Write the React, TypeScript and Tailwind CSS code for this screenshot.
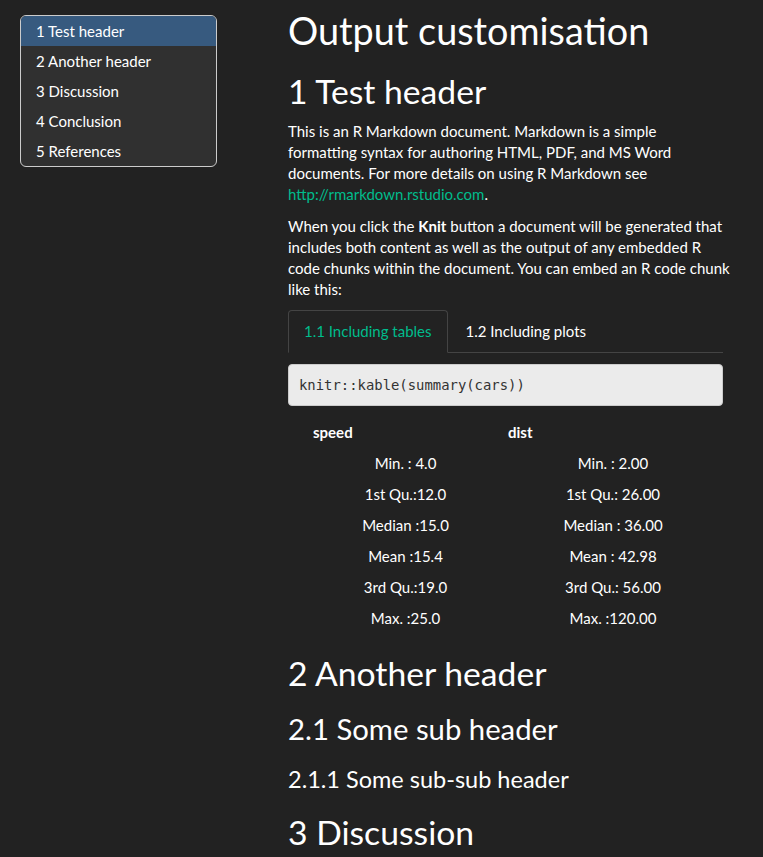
import React from "react";

const toc = ["1 Test header", "2 Another header", "3 Discussion", "4 Conclusion", "5 References"];

const rows: [string, string][] = [
  ["Min. : 4.0", "Min. : 2.00"],
  ["1st Qu.:12.0", "1st Qu.: 26.00"],
  ["Median :15.0", "Median : 36.00"],
  ["Mean :15.4", "Mean : 42.98"],
  ["3rd Qu.:19.0", "3rd Qu.: 56.00"],
  ["Max. :25.0", "Max. :120.00"],
];

export default function App() {
  return (
    <div className="min-h-[857px] bg-[#222222] text-white font-[Lato,sans-serif] text-[15px] leading-[21px] flex">
      <aside className="w-[288px] shrink-0 pl-[20px] pt-[15px]">
        <div className="w-[197px] border border-[#cccccc] rounded-[6px] overflow-hidden bg-[#303030]">
          {toc.map((t, i) => (
            <div
              key={t}
              className={
                i === 0
                  ? "h-[30px] flex items-center pl-[15px] pt-[1px] bg-[#375a7f] text-white text-[15px]"
                  : "h-[30px] flex items-center pl-[15px] pt-[1px] text-white text-[15px]"
              }
            >
              {t}
            </div>
          ))}
        </div>
      </aside>
      <main className="w-[435px] shrink-0 pt-[10px] pb-[20px]">
        <h1 className="text-[37.8px] leading-[1.1] font-normal mb-[10.5px]">Output customisation</h1>
        <h1 className="text-[33.7px] leading-[1.1] font-normal mt-[21px] mb-[11.5px]">1 Test header</h1>
        <p className="mb-[10.5px] w-[435px]">
          This is an R Markdown document. Markdown is a simple formatting syntax for authoring HTML, PDF, and MS Word
          documents. For more details on using R Markdown see{" "}
          <a className="text-[#00bc8c]" href="#">
            http://rmarkdown.rstudio.com
          </a>
          .
        </p>
        <p className="mb-[10.5px] w-[445px]">
          When you click the <b className="font-bold">Knit</b> button a document will be generated that includes both
          content as well as the output of any embedded R code chunks within the document. You can embed an R code chunk
          like this:
        </p>
        <div className="flex border-b border-[#444444] h-[43px]">
          <div className="h-[43px] px-[15px] flex items-center border border-[#444444] border-b-[#222222] rounded-t-[4px] text-[#00bc8c] bg-[#222222]">
            1.1 Including tables
          </div>
          <div className="h-[42px] ml-[2px] px-[15px] flex items-center border border-transparent text-white">
            1.2 Including plots
          </div>
        </div>
        <pre className="mt-[11px] mb-[10.5px] h-[42px] flex items-center px-[10px] bg-[#ebebeb] border border-[#cccccc] rounded-[4px] text-[#333333] text-[13.9px] font-['DejaVu_Sans_Mono',monospace]">
          knitr::kable(summary(cars))
        </pre>
        <div className="mt-0 mb-[21px]">
          <div className="grid grid-cols-[20px_195px_220px] h-[31px] items-center font-bold">
            <div />
            <div className="px-[5px]">speed</div>
            <div className="px-[5px]">dist</div>
          </div>
          {rows.map(([a, b]) => (
            <div key={a} className="grid grid-cols-[20px_195px_220px] h-[31px] items-center">
              <div />
              <div className="text-center">{a}</div>
              <div className="text-center">{b}</div>
            </div>
          ))}
        </div>
        <h1 className="text-[33.7px] leading-[1.1] font-normal mt-[21px] mb-[10.5px]">2 Another header</h1>
        <h2 className="text-[29.3px] leading-[1.1] font-normal mt-[21px] mb-[10.5px]">2.1 Some sub header</h2>
        <h3 className="text-[23.5px] leading-[1.1] font-normal mt-[22px] mb-[10.5px]">2.1.1 Some sub-sub header</h3>
        <h1 className="text-[33.7px] leading-[1.1] font-normal mt-[21px] mb-[10.5px]">3 Discussion</h1>
      </main>
    </div>
  );
}
